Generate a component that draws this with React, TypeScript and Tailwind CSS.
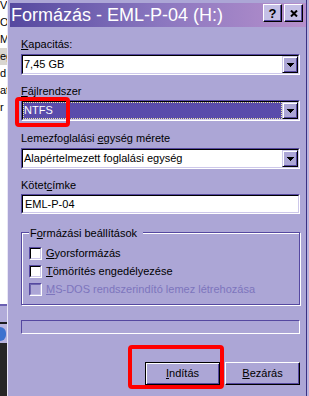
import React from 'react';

const explorerRows = [
  { text: 'VD', shade: false },
  { text: 'O-', shade: false },
  { text: 'ML', shade: false },
  { text: 'eg', shade: true },
  { text: 'd', shade: false },
  { text: 'at', shade: false },
  { text: 'r', shade: false },
];

function DropArrow() {
  return (
    <svg width="7" height="4" viewBox="0 0 7 4" shapeRendering="crispEdges">
      <rect x="0" y="0" width="7" height="1" fill="#000" />
      <rect x="1" y="1" width="5" height="1" fill="#000" />
      <rect x="2" y="2" width="3" height="1" fill="#000" />
      <rect x="3" y="3" width="1" height="1" fill="#000" />
    </svg>
  );
}

function Combo({ children, selected = false }: { children: React.ReactNode; selected?: boolean }) {
  return (
    <div className="flex h-[21px] border border-t-[#5548a0] border-l-[#5548a0] border-b-white border-r-white">
      <div className="flex flex-1 border border-t-black border-l-black border-b-[#cdc8ea] border-r-[#cdc8ea] bg-white">
        {selected ? (
          <div className="flex flex-1 items-center border border-dotted border-[#ece7a2] bg-[#5a4cab] text-white">
            {children}
          </div>
        ) : (
          <div className="flex flex-1 items-center pl-px">{children}</div>
        )}
        <div className="flex w-[16px] items-center justify-center border border-t-[#cdc8ea] border-l-[#cdc8ea] border-b-black border-r-black bg-[#aca6d6] shadow-[inset_1px_1px_0_#fff,inset_-1px_-1px_0_#5548a0]">
          <DropArrow />
        </div>
      </div>
    </div>
  );
}

function CheckBox({ disabled = false }: { disabled?: boolean }) {
  return (
    <span className="block h-[13px] w-[13px] shrink-0 border border-t-[#5548a0] border-l-[#5548a0] border-b-white border-r-white">
      <span
        className={`block h-full w-full border ${
          disabled
            ? 'border-t-[#6e66ae] border-l-[#6e66ae] border-b-[#c2bde4] border-r-[#c2bde4] bg-[#aca6d6]'
            : 'border-t-black border-l-black border-b-[#cdc8ea] border-r-[#cdc8ea] bg-white'
        }`}
      />
    </span>
  );
}

function TitleButton({ children }: { children: React.ReactNode }) {
  return (
    <div className="flex h-[18px] w-[19px] items-center justify-center border border-t-white border-l-white border-b-black border-r-black bg-[#c4bfe6] shadow-[inset_-1px_-1px_0_#5548a0]">
      {children}
    </div>
  );
}

function PushButton({ children, isDefault = false }: { children: React.ReactNode; isDefault?: boolean }) {
  return (
    <button
      className={`flex h-[23px] w-[75px] items-center justify-center bg-[#aca6d6] ${
        isDefault
          ? 'border border-black shadow-[inset_1px_1px_0_#fff,inset_-1px_-1px_0_#5548a0]'
          : 'border border-t-white border-l-white border-b-black border-r-black shadow-[inset_-1px_-1px_0_#5548a0]'
      }`}
    >
      {children}
    </button>
  );
}

function BackgroundStrip() {
  return (
    <div className="flex w-[7px] shrink-0 flex-col overflow-hidden">
      <div className="flex h-[304px] flex-col bg-white">
        <div className="mt-[-3px]">
          {explorerRows.map(row => (
            <div
              key={row.text}
              className={`flex h-[17px] items-center whitespace-nowrap ${row.shade ? 'bg-[#d9d6d0]' : ''}`}
            >
              {row.text}
            </div>
          ))}
        </div>
      </div>
      <div className="h-[2px] bg-[#6a5fb2]" />
      <div className="h-[16px] bg-[#b1abd9]" />
      <div className="h-[2px] bg-[#1c1c1c]" />
      <div className="flex h-[19px] items-center bg-[#b9b4de]">
        <div className="ml-[-6px] h-[14px] w-[12px] rounded-full bg-[#3d72cf]" />
      </div>
      <div className="flex-1 bg-[#262626]" />
    </div>
  );
}

function Dialog() {
  return (
    <div className="flex flex-1 bg-[#aca6d6]">
      <div className="flex flex-1 flex-col border-l border-[#e9e6f6] pl-[2px] pt-[3px]">
        <div className="flex h-[24px] items-start bg-linear-to-r from-[#55489f] via-[#8a76bf] to-[#b690cc]">
          <span className="pl-px text-[18px] leading-[24px] whitespace-nowrap text-white">
            Formázás - EML-P-04 (H:)
          </span>
          <div className="ml-auto mr-[3px] mt-px flex gap-[2px]">
            <TitleButton>
              <span className="text-[13px] leading-none font-bold">?</span>
            </TitleButton>
            <TitleButton>
              <svg width="8" height="7" viewBox="0 0 8 7">
                <path d="M1 0.5 L7 6.5 M7 0.5 L1 6.5" stroke="#000" strokeWidth="2" />
              </svg>
            </TitleButton>
          </div>
        </div>

        <div className="flex flex-col pl-[11px] pr-[6px] pt-[11px]">
          <div className="h-[13px]">
            <u>K</u>apacitás:
          </div>
          <div className="mt-[3px]">
            <Combo>7,45 GB</Combo>
          </div>

          <div className="mt-[10px] h-[13px]">
            <u>F</u>ájlrendszer
          </div>
          <div className="mt-[2px]">
            <Combo selected>NTFS</Combo>
          </div>

          <div className="mt-[11px] h-[13px]">
            Lemezfoglalási <u>e</u>gység mérete
          </div>
          <div className="mt-[3px]">
            <Combo>Alapértelmezett foglalási egység</Combo>
          </div>

          <div className="mt-[10px] h-[13px]">
            Kötet<u>c</u>ímke
          </div>
          <div className="mt-[2px] flex h-[20px] border border-t-[#5548a0] border-l-[#5548a0] border-b-white border-r-white">
            <div className="flex flex-1 items-center border border-t-black border-l-black border-b-[#cdc8ea] border-r-[#cdc8ea] bg-white pl-[2px]">
              EML-P-04
            </div>
          </div>

          <div className="mt-[18px] flex h-[73px] flex-col border border-[#5548a0] shadow-[inset_1px_1px_0_#fff,1px_1px_0_#fff]">
            <div className="mt-[-6px] ml-[7px] h-[13px] w-fit bg-[#aca6d6] pl-px pr-[6px]">
              F<u>o</u>rmázási beállítások
            </div>
            <div className="mt-[7px] flex flex-col gap-[5px] pl-[7px]">
              <div className="flex h-[13px] items-center gap-[4px]">
                <CheckBox />
                <span>
                  <u>G</u>yorsformázás
                </span>
              </div>
              <div className="flex h-[13px] items-center gap-[4px]">
                <CheckBox />
                <span>
                  <u>T</u>ömörítés engedélyezése
                </span>
              </div>
              <div className="flex h-[13px] items-center gap-[4px]">
                <CheckBox disabled />
                <span className="text-[#7d75bd]">
                  <u>M</u>S-DOS rendszerindító lemez létrehozása
                </span>
              </div>
            </div>
          </div>

          <div className="mt-[15px] h-[14px] border border-t-[#5548a0] border-l-[#5548a0] border-b-white border-r-white" />

          <div className="mt-[28px] flex justify-end gap-[5px]">
            <PushButton isDefault>
              <span>
                <u>I</u>ndítás
              </span>
            </PushButton>
            <PushButton>
              <span>
                <u>B</u>ezárás
              </span>
            </PushButton>
          </div>
        </div>
      </div>
      <div className="w-px bg-[#3c3183]" />
      <div className="w-[2px] bg-[#b8b2de]" />
    </div>
  );
}

export default function App() {
  return (
    <div className="relative flex h-[396px] w-[309px] overflow-hidden bg-[#262626] font-['Liberation_Sans',Arial,sans-serif] text-[11px] leading-[13px] text-black">
      <BackgroundStrip />
      <Dialog />
      {/* red highlight marks drawn over the dialog */}
      <div className="pointer-events-none absolute left-[15px] top-[97px] h-[30px] w-[55px] rounded-[4px] border-4 border-[#ff0000]" />
      <div className="pointer-events-none absolute left-[128px] top-[345px] h-[44px] w-[96px] rounded-[4px] border-4 border-[#ff0000]" />
    </div>
  );
}
